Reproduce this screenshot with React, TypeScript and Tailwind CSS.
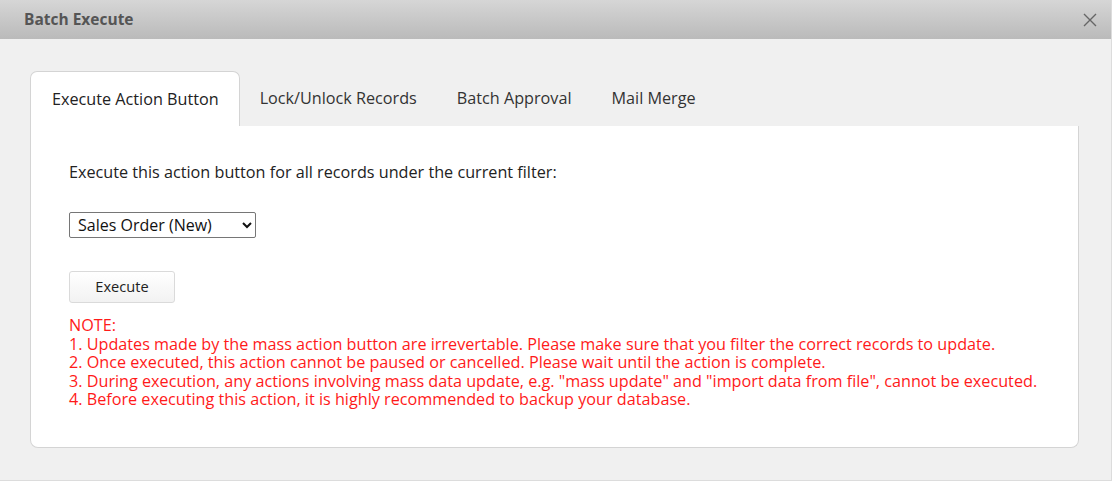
import { useState } from "react";

const tabs = ["Execute Action Button", "Lock/Unlock Records", "Batch Approval", "Mail Merge"];

const notes = [
  "NOTE:",
  "1. Updates made by the mass action button are irrevertable. Please make sure that you filter the correct records to update.",
  "2. Once executed, this action cannot be paused or cancelled. Please wait until the action is complete.",
  '3. During execution, any actions involving mass data update, e.g. "mass update" and "import data from file", cannot be executed.',
  "4. Before executing this action, it is highly recommended to backup your database.",
];

export default function App() {
  const [active, setActive] = useState(0);

  return (
    <div className="w-[1112px] h-[481px] bg-[#f0f0f0] border-r border-b border-[#dcdcdc] flex flex-col font-['Open_Sans',sans-serif] overflow-hidden">
      {/* Title bar */}
      <div className="h-[39px] shrink-0 bg-gradient-to-b from-[#d6d6d6] to-[#bababa] flex items-center justify-between pl-[24px] pr-[14px]">
        <p className="text-[15.5px] font-bold text-[#555555]">Batch Execute</p>
        <svg width="14" height="14" viewBox="0 0 14 14" className="text-[#666666]">
          <path d="M1 1L13 13M13 1L1 13" stroke="currentColor" strokeWidth="1.4" />
        </svg>
      </div>

      {/* Body */}
      <div className="flex-1 flex flex-col pt-[32px] pl-[30px] pr-[32px]">
        {/* Tabs */}
        <div className="flex flex-row h-[55px]">
          {tabs.map((t, i) => (
            <div
              key={t}
              onClick={() => setActive(i)}
              className={
                i === active
                  ? "h-[55px] pl-[21px] pr-[20px] flex items-center bg-white border border-b-0 border-[#d4d4d4] rounded-t-[7px] text-[16.2px] text-[#222222] cursor-pointer"
                  : "h-[55px] px-[20px] flex items-center text-[16.2px] text-[#333333] cursor-pointer"
              }
            >
              {t}
            </div>
          ))}
        </div>

        {/* Panel */}
        <div className="h-[322px] bg-white border border-t-0 border-[#d4d4d4] rounded-b-[8px] pl-[38px] pt-[34px] text-[16.2px] text-[#222222]">
          <p className="leading-[24px]">Execute this action button for all records under the current filter:</p>

          <select className="mt-[28px] w-[187px] h-[26px] border border-[#767676] rounded-[2px] text-[16px] pl-[4px] bg-white text-[#111111]">
            <option>Sales Order (New)</option>
          </select>

          <div className="mt-[33px]">
            <button className="w-[106px] h-[32px] bg-gradient-to-b from-[#ffffff] to-[#f2f2f2] border border-[#dadada] rounded-[3px] text-[14.6px] text-[#222222]">
              Execute
            </button>
          </div>

          <div className="mt-[13px] text-[#ff1a1a] text-[16.2px] leading-[18.6px]">
            {notes.map((n) => (
              <p key={n}>{n}</p>
            ))}
          </div>
        </div>
      </div>
    </div>
  );
}
